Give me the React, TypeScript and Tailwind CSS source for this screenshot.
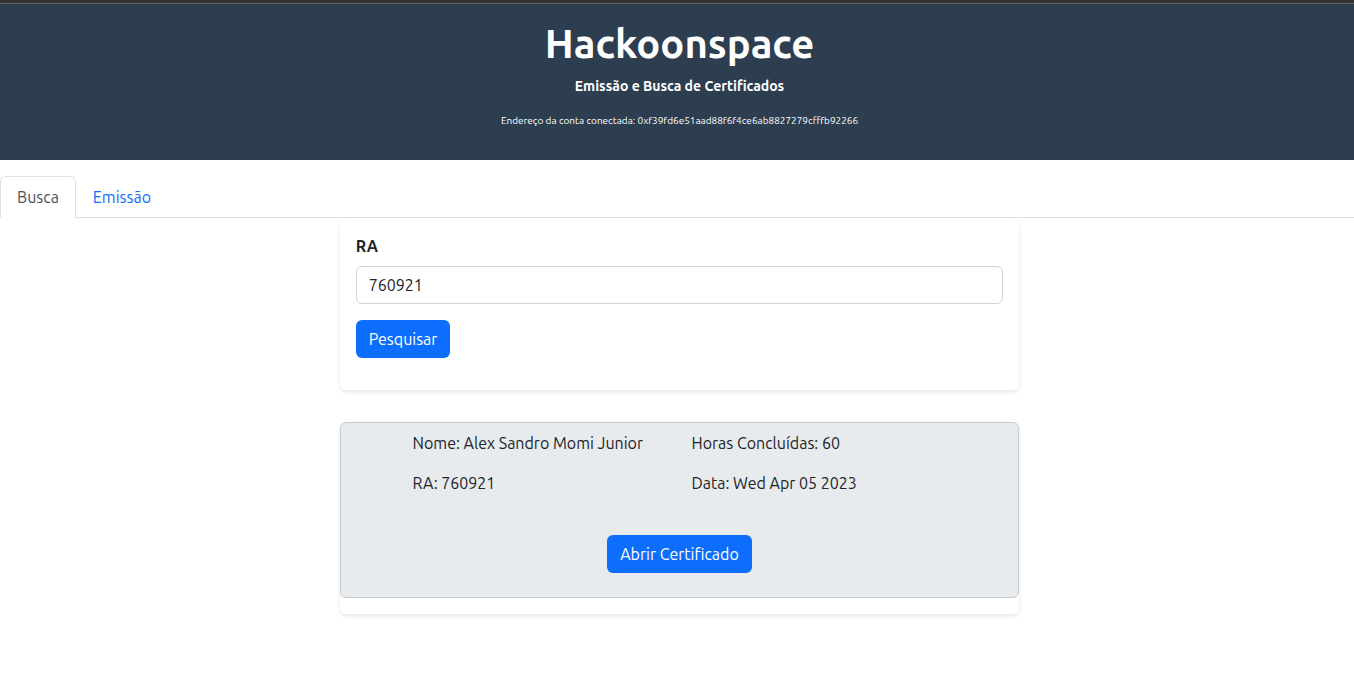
import { useState } from "react";
import type { ReactNode } from "react";

const tabs = ["Busca", "Emissão"];

function PrimaryButton({ type, children }: { type: "submit" | "button"; children: ReactNode }) {
  return (
    <button
      type={type}
      className="h-[38px] cursor-pointer rounded-md bg-[#0d6efd] px-[13px] leading-6 text-white hover:bg-[#0b5ed7]"
    >
      {children}
    </button>
  );
}

export default function App() {
  const [active, setActive] = useState("Busca");
  const [ra, setRa] = useState("760921");

  return (
    <div className="min-h-screen overflow-x-hidden bg-white font-['Ubuntu','Noto_Sans',sans-serif] text-base leading-6 text-[#212529]">
      <div className="w-[calc(100%+5px)]">
        <header className="border-t-[3px] border-[#333333] bg-[#2c3e50] text-center text-white">
          <div className="border-t border-[#66635f] px-4 pt-4 pb-[30px]">
            <h1 className="text-[40px] leading-[48px] font-semibold">Hackoonspace</h1>
            <h2 className="mt-2 text-[14px] leading-5 font-semibold">Emissão e Busca de Certificados</h2>
            <p className="mt-4 text-[10px] leading-[18px]">
              Endereço da conta conectada: 0xf39fd6e51aad88f6f4ce6ab8827279cfffb92266
            </p>
          </div>
        </header>

        <nav role="tablist" className="mt-4 flex border-b border-[#dee2e6]">
          {tabs.map((tab) => (
            <button
              key={tab}
              type="button"
              role="tab"
              aria-selected={active === tab}
              onClick={() => setActive(tab)}
              className={
                active === tab
                  ? "-mb-px h-[42px] rounded-t-md border border-[#dee2e6] border-b-white bg-white px-4 text-[#495057]"
                  : "-mb-px h-[42px] cursor-pointer rounded-t-md border border-transparent px-4 text-[#0d6efd]"
              }
            >
              {tab}
            </button>
          ))}
        </nav>

        <main className="mx-auto w-1/2">
          <form
            onSubmit={(e) => e.preventDefault()}
            className="rounded-md px-4 pt-4 pb-8 shadow-[0_2px_4px_rgba(0,0,0,0.1)]"
          >
            <label htmlFor="ra" className="mb-2 block font-bold">
              RA
            </label>
            <input
              id="ra"
              value={ra}
              onChange={(e) => setRa(e.target.value)}
              className="mb-4 block h-[38px] w-full rounded-md border border-[#ced4da] bg-white px-3 outline-none focus:border-[#86b7fe]"
            />
            <PrimaryButton type="submit">Pesquisar</PrimaryButton>
          </form>

          <section className="mt-8 rounded-md pb-4 shadow-[0_2px_4px_rgba(0,0,0,0.1)]">
            <div className="rounded-md border border-[#c9cccf] bg-[#e8ebee] px-1 pt-2 pb-6">
              <div className="mx-auto grid w-10/12 grid-cols-2 gap-y-4">
                <p className="px-3">Nome: Alex Sandro Momi Junior</p>
                <p className="px-3">Horas Concluídas: 60</p>
                <p className="px-3">RA: 760921</p>
                <p className="px-3">Data: Wed Apr 05 2023</p>
              </div>
              <div className="mt-10 flex justify-center">
                <PrimaryButton type="button">Abrir Certificado</PrimaryButton>
              </div>
            </div>
          </section>
        </main>
      </div>
    </div>
  );
}
